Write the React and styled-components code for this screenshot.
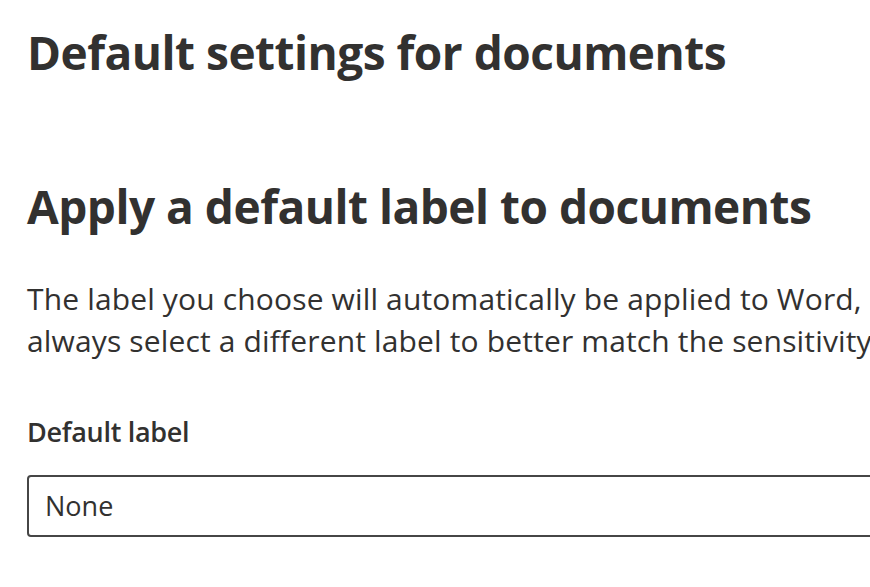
import styled, { createGlobalStyle } from "styled-components";

const GlobalStyle = createGlobalStyle`
  html, body {
    margin: 0;
    padding: 0;
    background: #ffffff;
    overflow: hidden;
  }
`;

const Page = styled.main`
  width: 870px;
  height: 587px;
  overflow: hidden;
  padding: 22px 0 0 27px;
  box-sizing: border-box;
  font-family: "Open Sans", "Noto Sans", sans-serif;
  color: #323130;
`;

const PageTitle = styled.h1`
  margin: 0;
  font-size: 46px;
  font-weight: 700;
  letter-spacing: -0.5px;
  line-height: 60px;
  white-space: nowrap;
`;

const Section = styled.section`
  margin-top: 94px;
`;

const SectionTitle = styled.h2`
  margin: 0;
  font-size: 46px;
  font-weight: 700;
  letter-spacing: -0.5px;
  line-height: 60px;
  white-space: nowrap;
`;

const Description = styled.p`
  margin: 42px 0 0 0;
  font-size: 30px;
  font-weight: 400;
  letter-spacing: 0.15px;
  line-height: 42px;
  white-space: nowrap;
`;

const Field = styled.div`
  margin-top: 50px;
  display: flex;
  flex-direction: column;
  gap: 23px;
`;

const FieldLabel = styled.label`
  font-size: 27px;
  font-weight: 600;
  letter-spacing: -0.3px;
  line-height: 40px;
`;

const SelectBox = styled.div`
  width: 900px;
  height: 62px;
  box-sizing: border-box;
  border: 2px solid #464646;
  border-radius: 4px;
  padding: 0 16px;
  font-size: 27px;
  line-height: 58px;
  white-space: nowrap;
`;

export default function App() {
  return (
    <>
      <GlobalStyle />
      <Page>
        <PageTitle>Default settings for documents</PageTitle>
        <Section>
          <SectionTitle>Apply a default label to documents</SectionTitle>
          <Description>
            The label you choose will automatically be applied to Word, Excel and PowerPoint files.
            <br />
            always select a different label to better match the sensitivity of their content.
          </Description>
          <Field>
            <FieldLabel>Default label</FieldLabel>
            <SelectBox>None</SelectBox>
          </Field>
        </Section>
      </Page>
    </>
  );
}
